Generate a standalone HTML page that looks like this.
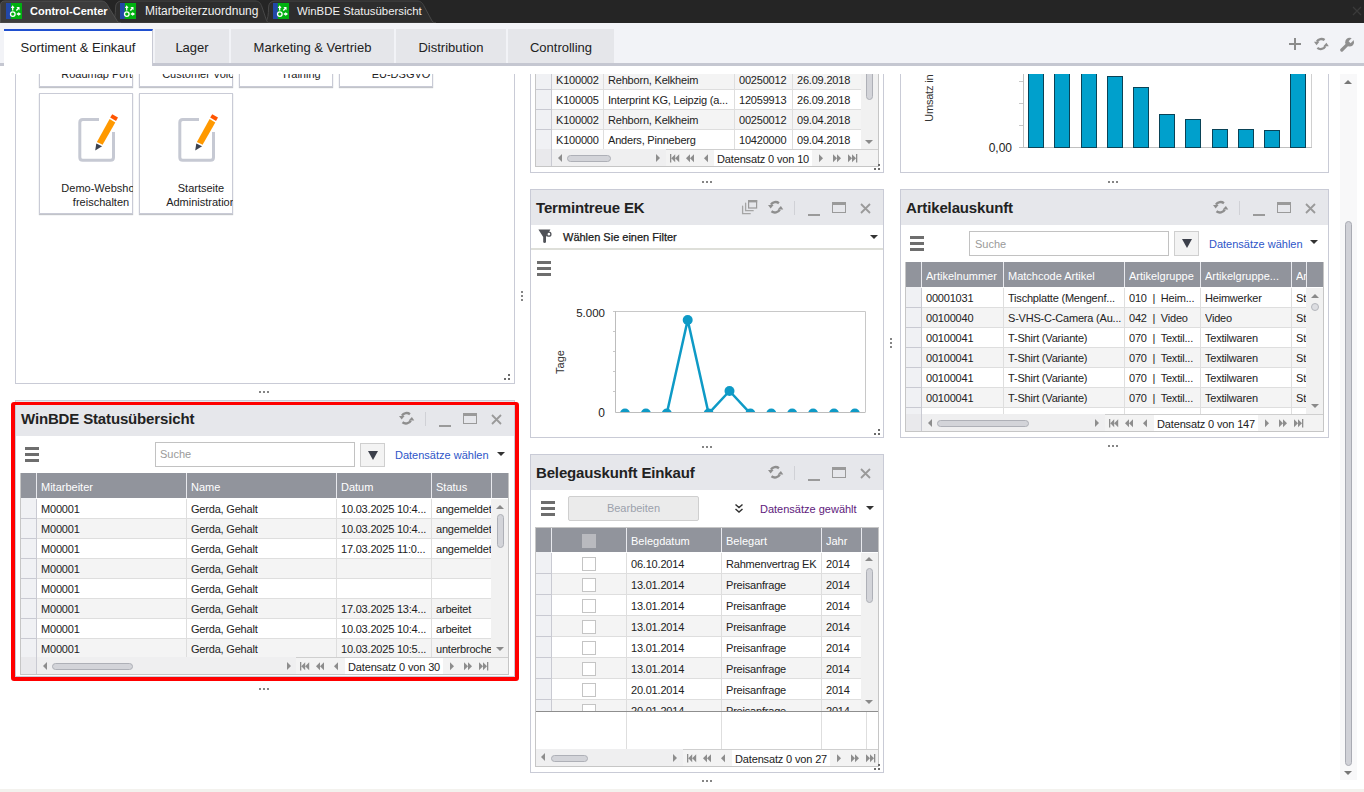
<!DOCTYPE html>
<html><head><meta charset="utf-8"><style>
html,body{margin:0;padding:0;}
body{width:1364px;height:792px;overflow:hidden;position:relative;background:#fff;font-family:"Liberation Sans",sans-serif;color:#222;}
div{position:absolute;box-sizing:border-box;}
.t{white-space:nowrap;font-size:11px;line-height:14px;}
.clip{overflow:hidden;}
</style></head><body>

<div style="left:0;top:74px;width:1364px;height:715px;overflow:hidden"><div style="left:0;top:-74px;width:1364px;height:792px">
<div style="left:15px;top:20px;width:500px;height:364px;border:1px solid #c9cbd6;background:#fff;box-sizing:border-box"></div>
<div style="left:39px;top:-34px;width:94px;height:121px;border:1px solid #c9cbd6;background:#fff;box-shadow:0 1px 1px rgba(80,85,100,0.35)"></div><div class="clip" style="left:40px;top:-34px;width:93px;height:121px"><div class="t" style="left:-39px;top:87px;width:200px;text-align:center;line-height:14px">Produkt<br>Roadmap Portal</div></div>
<div style="left:139px;top:-34px;width:94px;height:121px;border:1px solid #c9cbd6;background:#fff;box-shadow:0 1px 1px rgba(80,85,100,0.35)"></div><div class="clip" style="left:140px;top:-34px;width:93px;height:121px"><div class="t" style="left:-39px;top:87px;width:200px;text-align:center;line-height:14px">Produkt<br>Customer Voice</div></div>
<div style="left:239px;top:-34px;width:94px;height:121px;border:1px solid #c9cbd6;background:#fff;box-shadow:0 1px 1px rgba(80,85,100,0.35)"></div><div class="clip" style="left:240px;top:-34px;width:93px;height:121px"><div class="t" style="left:-39px;top:87px;width:200px;text-align:center;line-height:14px">Produkt<br>Training</div></div>
<div style="left:339px;top:-34px;width:94px;height:121px;border:1px solid #c9cbd6;background:#fff;box-shadow:0 1px 1px rgba(80,85,100,0.35)"></div><div class="clip" style="left:340px;top:-34px;width:93px;height:121px"><div class="t" style="left:-39px;top:87px;width:200px;text-align:center;line-height:14px">Produkt<br>EU-DSGVO</div></div>
<div style="left:39px;top:93px;width:94px;height:121px;border:1px solid #c9cbd6;background:#fff;box-shadow:0 1px 1px rgba(80,85,100,0.35)"></div><div class="clip" style="left:40px;top:93px;width:93px;height:121px"><div class="t" style="left:-39px;top:88px;width:200px;text-align:center;line-height:14px">Demo-Webshop<br>freischalten</div></div>
<svg style="position:absolute;left:70px;top:105px" width="55" height="60" viewBox="0 0 55 60"><path d="M29 14.4 H12.8 Q9.8 14.4 9.8 17.4 V52.3 Q9.8 55.3 12.8 55.3 H40.5 Q43.5 55.3 43.5 52.3 V27" fill="none" stroke="#c6c9d3" stroke-width="3"/><path d="M26.9 37.1 L32.6 39.8 L45.3 17.4 L39.6 14.1 Z" fill="#ff9900"/><path d="M40.2 12.6 L46 15.9 L48 12.6 L42.2 9.3 Z" fill="#ff5500"/><path d="M26.3 38.6 L32.1 41.3 L25.2 45.5 Z" fill="#3c4250"/></svg>
<div style="left:139px;top:93px;width:94px;height:121px;border:1px solid #c9cbd6;background:#fff;box-shadow:0 1px 1px rgba(80,85,100,0.35)"></div><div class="clip" style="left:140px;top:93px;width:93px;height:121px"><div class="t" style="left:-39px;top:88px;width:200px;text-align:center;line-height:14px">Startseite<br>Administration</div></div>
<svg style="position:absolute;left:170px;top:105px" width="55" height="60" viewBox="0 0 55 60"><path d="M29 14.4 H12.8 Q9.8 14.4 9.8 17.4 V52.3 Q9.8 55.3 12.8 55.3 H40.5 Q43.5 55.3 43.5 52.3 V27" fill="none" stroke="#c6c9d3" stroke-width="3"/><path d="M26.9 37.1 L32.6 39.8 L45.3 17.4 L39.6 14.1 Z" fill="#ff9900"/><path d="M40.2 12.6 L46 15.9 L48 12.6 L42.2 9.3 Z" fill="#ff5500"/><path d="M26.3 38.6 L32.1 41.3 L25.2 45.5 Z" fill="#3c4250"/></svg>
<div style="left:508px;top:374px;width:2px;height:2px;background:#6a6a6a"></div><div style="left:504px;top:378px;width:2px;height:2px;background:#6a6a6a"></div><div style="left:508px;top:378px;width:2px;height:2px;background:#6a6a6a"></div>
<div style="left:259px;top:391px;width:2px;height:2px;background:#858585"></div><div style="left:263px;top:391px;width:2px;height:2px;background:#858585"></div><div style="left:267px;top:391px;width:2px;height:2px;background:#858585"></div>
<div style="left:521px;top:291px;width:2px;height:2px;background:#858585"></div><div style="left:521px;top:295px;width:2px;height:2px;background:#858585"></div><div style="left:521px;top:299px;width:2px;height:2px;background:#858585"></div>
<div style="left:15px;top:400px;width:500px;height:277px;border:1px solid #c9cbd6;background:#fff;box-sizing:border-box"></div><div style="left:16px;top:401px;width:498px;height:35px;background:#e6e7eb"></div><div class="t" style="left:21px;top:401px;font-size:15px;font-weight:bold;color:#222;line-height:36px;letter-spacing:-0.15px">WinBDE Statusübersicht</div><svg style="position:absolute;left:398px;top:410px" width="16.5" height="16.5" viewBox="0 0 15 15"><path d="M10.85 3.78 A5 5 0 0 0 3.6 5.2" fill="none" stroke="#8e8e8e" stroke-width="2.2"/><path d="M4.09 11.16 A5 5 0 0 0 11.6 9.6" fill="none" stroke="#8e8e8e" stroke-width="2.2"/><path d="M0.9 5.4 L6 5.4 L3.3 8.6 Z" fill="#8e8e8e"/><path d="M9.7 9.6 L14.8 9.6 L12.6 6.3 Z" fill="#8e8e8e"/></svg><div style="left:425px;top:412px;width:1px;height:14px;background:#d0d1d6"></div><div style="left:439px;top:425px;width:12px;height:2px;background:#9a9a9a"></div><div style="left:463px;top:413px;width:14px;height:11px;border:1.5px solid #9a9a9a;border-top-width:3px;box-sizing:border-box"></div><svg style="position:absolute;left:491px;top:414px" width="11" height="11" viewBox="0 0 11 11"><path d="M1 1L10 10M10 1L1 10" stroke="#9a9a9a" stroke-width="1.8"/></svg>
<div style="left:25px;top:447px;width:14px;height:3px;background:#6e6e6e"></div><div style="left:25px;top:453px;width:14px;height:3px;background:#6e6e6e"></div><div style="left:25px;top:459px;width:14px;height:3px;background:#6e6e6e"></div>
<div style="left:155px;top:442px;width:200px;height:25px;border:1px solid #c2c2c2;background:#fff"></div>
<div class="t" style="left:160px;top:442px;color:#9a9a9a;line-height:25px">Suche</div>
<div style="left:360px;top:443px;width:25px;height:24px;border:1px solid #cfcfcf;background:#f3f3f3"></div>
<div style="left:368px;top:451px;width:0;height:0;border-top:9px solid #3b3f4a;border-left:5px solid transparent;border-right:5px solid transparent"></div>
<div class="t" style="left:395px;top:448px;font-size:11px;color:#2d55c8;line-height:14px">Datensätze wählen</div>
<div style="left:497px;top:452px;width:0;height:0;border-top:4px solid #333;border-left:4px solid transparent;border-right:4px solid transparent"></div>
<div style="left:20px;top:473px;width:489px;height:202px;border:1px solid #c6c6c6;background:#fff"></div><div style="left:21px;top:498px;width:15px;height:159px;background:#f0f1f4"></div><div style="left:21px;top:499px;width:470px;height:20px;background:#fff"></div><div style="left:21px;top:499px;width:15px;height:20px;background:#f0f1f4"></div><div style="left:21px;top:518px;width:470px;height:1px;background:#dedede"></div><div style="left:21px;top:518px;width:15px;height:1px;background:#c9cad2"></div><div class="t clip" style="left:41px;top:499px;width:145px;height:20px;line-height:21px;letter-spacing:-0.2px">M00001</div><div class="t clip" style="left:191px;top:499px;width:145px;height:20px;line-height:21px;letter-spacing:-0.2px">Gerda, Gehalt</div><div class="t clip" style="left:341px;top:499px;width:90px;height:20px;line-height:21px;letter-spacing:-0.2px">10.03.2025 10:4...</div><div class="t clip" style="left:436px;top:499px;width:55px;height:20px;line-height:21px;letter-spacing:-0.2px">angemeldet</div><div style="left:21px;top:519px;width:470px;height:20px;background:#f4f4f4"></div><div style="left:21px;top:519px;width:15px;height:20px;background:#f0f1f4"></div><div style="left:21px;top:538px;width:470px;height:1px;background:#dedede"></div><div style="left:21px;top:538px;width:15px;height:1px;background:#c9cad2"></div><div class="t clip" style="left:41px;top:519px;width:145px;height:20px;line-height:21px;letter-spacing:-0.2px">M00001</div><div class="t clip" style="left:191px;top:519px;width:145px;height:20px;line-height:21px;letter-spacing:-0.2px">Gerda, Gehalt</div><div class="t clip" style="left:341px;top:519px;width:90px;height:20px;line-height:21px;letter-spacing:-0.2px">10.03.2025 10:4...</div><div class="t clip" style="left:436px;top:519px;width:55px;height:20px;line-height:21px;letter-spacing:-0.2px">angemeldet</div><div style="left:21px;top:539px;width:470px;height:20px;background:#fff"></div><div style="left:21px;top:539px;width:15px;height:20px;background:#f0f1f4"></div><div style="left:21px;top:558px;width:470px;height:1px;background:#dedede"></div><div style="left:21px;top:558px;width:15px;height:1px;background:#c9cad2"></div><div class="t clip" style="left:41px;top:539px;width:145px;height:20px;line-height:21px;letter-spacing:-0.2px">M00001</div><div class="t clip" style="left:191px;top:539px;width:145px;height:20px;line-height:21px;letter-spacing:-0.2px">Gerda, Gehalt</div><div class="t clip" style="left:341px;top:539px;width:90px;height:20px;line-height:21px;letter-spacing:-0.2px">17.03.2025 11:0...</div><div class="t clip" style="left:436px;top:539px;width:55px;height:20px;line-height:21px;letter-spacing:-0.2px">angemeldet</div><div style="left:21px;top:559px;width:470px;height:20px;background:#f4f4f4"></div><div style="left:21px;top:559px;width:15px;height:20px;background:#f0f1f4"></div><div style="left:21px;top:578px;width:470px;height:1px;background:#dedede"></div><div style="left:21px;top:578px;width:15px;height:1px;background:#c9cad2"></div><div class="t clip" style="left:41px;top:559px;width:145px;height:20px;line-height:21px;letter-spacing:-0.2px">M00001</div><div class="t clip" style="left:191px;top:559px;width:145px;height:20px;line-height:21px;letter-spacing:-0.2px">Gerda, Gehalt</div><div style="left:21px;top:579px;width:470px;height:20px;background:#fff"></div><div style="left:21px;top:579px;width:15px;height:20px;background:#f0f1f4"></div><div style="left:21px;top:598px;width:470px;height:1px;background:#dedede"></div><div style="left:21px;top:598px;width:15px;height:1px;background:#c9cad2"></div><div class="t clip" style="left:41px;top:579px;width:145px;height:20px;line-height:21px;letter-spacing:-0.2px">M00001</div><div class="t clip" style="left:191px;top:579px;width:145px;height:20px;line-height:21px;letter-spacing:-0.2px">Gerda, Gehalt</div><div style="left:21px;top:599px;width:470px;height:20px;background:#f4f4f4"></div><div style="left:21px;top:599px;width:15px;height:20px;background:#f0f1f4"></div><div style="left:21px;top:618px;width:470px;height:1px;background:#dedede"></div><div style="left:21px;top:618px;width:15px;height:1px;background:#c9cad2"></div><div class="t clip" style="left:41px;top:599px;width:145px;height:20px;line-height:21px;letter-spacing:-0.2px">M00001</div><div class="t clip" style="left:191px;top:599px;width:145px;height:20px;line-height:21px;letter-spacing:-0.2px">Gerda, Gehalt</div><div class="t clip" style="left:341px;top:599px;width:90px;height:20px;line-height:21px;letter-spacing:-0.2px">17.03.2025 13:4...</div><div class="t clip" style="left:436px;top:599px;width:55px;height:20px;line-height:21px;letter-spacing:-0.2px">arbeitet</div><div style="left:21px;top:619px;width:470px;height:20px;background:#fff"></div><div style="left:21px;top:619px;width:15px;height:20px;background:#f0f1f4"></div><div style="left:21px;top:638px;width:470px;height:1px;background:#dedede"></div><div style="left:21px;top:638px;width:15px;height:1px;background:#c9cad2"></div><div class="t clip" style="left:41px;top:619px;width:145px;height:20px;line-height:21px;letter-spacing:-0.2px">M00001</div><div class="t clip" style="left:191px;top:619px;width:145px;height:20px;line-height:21px;letter-spacing:-0.2px">Gerda, Gehalt</div><div class="t clip" style="left:341px;top:619px;width:90px;height:20px;line-height:21px;letter-spacing:-0.2px">10.03.2025 10:4...</div><div class="t clip" style="left:436px;top:619px;width:55px;height:20px;line-height:21px;letter-spacing:-0.2px">arbeitet</div><div style="left:21px;top:639px;width:470px;height:18px;background:#f4f4f4"></div><div style="left:21px;top:639px;width:15px;height:18px;background:#f0f1f4"></div><div class="t clip" style="left:41px;top:639px;width:145px;height:18px;line-height:21px;letter-spacing:-0.2px">M00001</div><div class="t clip" style="left:191px;top:639px;width:145px;height:18px;line-height:21px;letter-spacing:-0.2px">Gerda, Gehalt</div><div class="t clip" style="left:341px;top:639px;width:90px;height:18px;line-height:21px;letter-spacing:-0.2px">10.03.2025 10:5...</div><div class="t clip" style="left:436px;top:639px;width:55px;height:18px;line-height:21px;letter-spacing:-0.2px">unterbrochen</div><div style="left:186px;top:499px;width:1px;height:158px;background:#dedede"></div><div style="left:336px;top:499px;width:1px;height:158px;background:#dedede"></div><div style="left:431px;top:499px;width:1px;height:158px;background:#dedede"></div><div style="left:36px;top:499px;width:1px;height:158px;background:#c9cad2"></div><div style="left:21px;top:473px;width:487px;height:25px;background:#91949c"></div><div style="left:36px;top:473px;width:1px;height:25px;background:#e8e9ee"></div><div style="left:186px;top:473px;width:1px;height:25px;background:#e8e9ee"></div><div style="left:336px;top:473px;width:1px;height:25px;background:#e8e9ee"></div><div style="left:431px;top:473px;width:1px;height:25px;background:#e8e9ee"></div><div style="left:491px;top:473px;width:1px;height:25px;background:#e8e9ee"></div><div class="t clip" style="left:41px;top:473px;width:145px;height:25px;line-height:28px;color:#fff">Mitarbeiter</div><div class="t clip" style="left:191px;top:473px;width:145px;height:25px;line-height:28px;color:#fff">Name</div><div class="t clip" style="left:341px;top:473px;width:90px;height:25px;line-height:28px;color:#fff">Datum</div><div class="t clip" style="left:436px;top:473px;width:55px;height:25px;line-height:28px;color:#fff">Status</div><div style="left:491px;top:499px;width:17px;height:158px;background:#f1f1f1"></div>
<div style="left:496px;top:505px;width:0;height:0;border-bottom:4px solid #8a8a8a;border-left:4px solid transparent;border-right:4px solid transparent"></div><div style="left:496px;top:647px;width:0;height:0;border-top:4px solid #8a8a8a;border-left:4px solid transparent;border-right:4px solid transparent"></div><div style="left:497px;top:514px;width:7px;height:34px;background:#d3d4d9;border:1px solid #aeb0b7;border-radius:4px"></div>
<div style="left:21px;top:657px;width:16px;height:17px;background:#e9e9ec"></div><div style="left:36px;top:657px;width:1px;height:17px;background:#c9cad2"></div><div style="left:37px;top:657px;width:259px;height:17px;background:#efeff0"></div><div style="left:296px;top:657px;width:212px;height:17px;background:#f3f3f3;border-top:1px solid #cfcfcf"></div><div style="left:43px;top:662px;width:0;height:0;border-right:4px solid #8d8d8d;border-top:4px solid transparent;border-bottom:4px solid transparent"></div><div style="left:52px;top:663px;width:81px;height:7px;background:#d3d4d9;border:1px solid #aeb0b7;border-radius:4px"></div><div style="left:287px;top:662px;width:0;height:0;border-left:4px solid #8d8d8d;border-top:4px solid transparent;border-bottom:4px solid transparent"></div><svg style="position:absolute;left:299px;top:662px" width="42" height="9" viewBox="-1 0 42 9"><path d="M0 0 H1.3 V8.5 H0Z M1.3 4.25 L5.2 0.2 V8.3Z M5.2 4.25 L9.2 0.2 V8.3Z M16 4.25 L20 0.2 V8.3Z M20 4.25 L24 0.2 V8.3Z M34 4.25 L38 0.2 V8.3Z" fill="#8d8d8d"/></svg><div style="left:345px;top:658px;width:98px;height:16px;background:#fff"></div><div class="t" style="left:348px;top:657px;height:17px;line-height:20px;letter-spacing:-0.15px">Datensatz 0 von 30</div><svg style="position:absolute;left:450px;top:662px" width="42" height="9" viewBox="0 0 42 9"><path d="M0 0.2 L4 4.25 L0 8.3Z M14 0.2 L18 4.25 L14 8.3Z M18 0.2 L22 4.25 L18 8.3Z M29 0.2 L33 4.25 L29 8.3Z M33 0.2 L37 4.25 L33 8.3Z M37 0 H38.3 V8.5 H37Z" fill="#8d8d8d"/></svg>
<div style="left:11px;top:402px;width:508px;height:279px;border:4px solid #ff0000;border-top-width:3px;border-radius:3px"></div>
<div style="left:259px;top:688px;width:2px;height:2px;background:#858585"></div><div style="left:263px;top:688px;width:2px;height:2px;background:#858585"></div><div style="left:267px;top:688px;width:2px;height:2px;background:#858585"></div>
<div style="left:530px;top:20px;width:354px;height:153px;border:1px solid #c9cbd6;background:#fff;box-sizing:border-box"></div>
<div style="left:535px;top:40px;width:344px;height:127px;border:1px solid #c6c6c6;background:#fff"></div><div style="left:536px;top:70px;width:325px;height:20px;background:#f4f4f4"></div><div style="left:536px;top:70px;width:15px;height:20px;background:#f0f1f4"></div><div style="left:536px;top:89px;width:325px;height:1px;background:#dedede"></div><div style="left:536px;top:89px;width:15px;height:1px;background:#c9cad2"></div><div class="t clip" style="left:556px;top:70px;width:47px;height:20px;line-height:21px;letter-spacing:-0.2px">K100002</div><div class="t clip" style="left:608px;top:70px;width:126px;height:20px;line-height:21px;letter-spacing:-0.2px">Rehborn, Kelkheim</div><div class="t clip" style="left:739px;top:70px;width:53px;height:20px;line-height:21px;letter-spacing:-0.2px">00250012</div><div class="t clip" style="left:797px;top:70px;width:64px;height:20px;line-height:21px;letter-spacing:-0.2px">26.09.2018</div><div style="left:536px;top:90px;width:325px;height:20px;background:#fff"></div><div style="left:536px;top:90px;width:15px;height:20px;background:#f0f1f4"></div><div style="left:536px;top:109px;width:325px;height:1px;background:#dedede"></div><div style="left:536px;top:109px;width:15px;height:1px;background:#c9cad2"></div><div class="t clip" style="left:556px;top:90px;width:47px;height:20px;line-height:21px;letter-spacing:-0.2px">K100005</div><div class="t clip" style="left:608px;top:90px;width:126px;height:20px;line-height:21px;letter-spacing:-0.2px">Interprint KG, Leipzig (a...</div><div class="t clip" style="left:739px;top:90px;width:53px;height:20px;line-height:21px;letter-spacing:-0.2px">12059913</div><div class="t clip" style="left:797px;top:90px;width:64px;height:20px;line-height:21px;letter-spacing:-0.2px">26.09.2018</div><div style="left:536px;top:110px;width:325px;height:20px;background:#f4f4f4"></div><div style="left:536px;top:110px;width:15px;height:20px;background:#f0f1f4"></div><div style="left:536px;top:129px;width:325px;height:1px;background:#dedede"></div><div style="left:536px;top:129px;width:15px;height:1px;background:#c9cad2"></div><div class="t clip" style="left:556px;top:110px;width:47px;height:20px;line-height:21px;letter-spacing:-0.2px">K100002</div><div class="t clip" style="left:608px;top:110px;width:126px;height:20px;line-height:21px;letter-spacing:-0.2px">Rehborn, Kelkheim</div><div class="t clip" style="left:739px;top:110px;width:53px;height:20px;line-height:21px;letter-spacing:-0.2px">00250012</div><div class="t clip" style="left:797px;top:110px;width:64px;height:20px;line-height:21px;letter-spacing:-0.2px">09.04.2018</div><div style="left:536px;top:130px;width:325px;height:19px;background:#fff"></div><div style="left:536px;top:130px;width:15px;height:19px;background:#f0f1f4"></div><div class="t clip" style="left:556px;top:130px;width:47px;height:19px;line-height:21px;letter-spacing:-0.2px">K100000</div><div class="t clip" style="left:608px;top:130px;width:126px;height:19px;line-height:21px;letter-spacing:-0.2px">Anders, Pinneberg</div><div class="t clip" style="left:739px;top:130px;width:53px;height:19px;line-height:21px;letter-spacing:-0.2px">10420000</div><div class="t clip" style="left:797px;top:130px;width:64px;height:19px;line-height:21px;letter-spacing:-0.2px">09.04.2018</div><div style="left:603px;top:70px;width:1px;height:79px;background:#dedede"></div><div style="left:734px;top:70px;width:1px;height:79px;background:#dedede"></div><div style="left:792px;top:70px;width:1px;height:79px;background:#dedede"></div><div style="left:551px;top:70px;width:1px;height:79px;background:#c9cad2"></div><div style="left:861px;top:41px;width:17px;height:108px;background:#f1f1f1"></div>
<div style="left:865px;top:140px;width:0;height:0;border-top:4px solid #8a8a8a;border-left:4px solid transparent;border-right:4px solid transparent"></div><div style="left:866px;top:30px;width:7px;height:70px;background:#d3d4d9;border:1px solid #aeb0b7;border-radius:4px"></div>
<div style="left:536px;top:149px;width:16px;height:17px;background:#e9e9ec"></div><div style="left:551px;top:149px;width:1px;height:17px;background:#c9cad2"></div><div style="left:552px;top:149px;width:114px;height:17px;background:#efeff0"></div><div style="left:666px;top:149px;width:212px;height:17px;background:#f3f3f3;border-top:1px solid #cfcfcf"></div><div style="left:558px;top:154px;width:0;height:0;border-right:4px solid #8d8d8d;border-top:4px solid transparent;border-bottom:4px solid transparent"></div><div style="left:567px;top:155px;width:44px;height:7px;background:#d3d4d9;border:1px solid #aeb0b7;border-radius:4px"></div><div style="left:656px;top:154px;width:0;height:0;border-left:4px solid #8d8d8d;border-top:4px solid transparent;border-bottom:4px solid transparent"></div><svg style="position:absolute;left:669px;top:154px" width="42" height="9" viewBox="-1 0 42 9"><path d="M0 0 H1.3 V8.5 H0Z M1.3 4.25 L5.2 0.2 V8.3Z M5.2 4.25 L9.2 0.2 V8.3Z M16 4.25 L20 0.2 V8.3Z M20 4.25 L24 0.2 V8.3Z M34 4.25 L38 0.2 V8.3Z" fill="#8d8d8d"/></svg><div style="left:714px;top:150px;width:98px;height:16px;background:#fff"></div><div class="t" style="left:717px;top:149px;height:17px;line-height:20px;letter-spacing:-0.15px">Datensatz 0 von 10</div><svg style="position:absolute;left:819px;top:154px" width="42" height="9" viewBox="0 0 42 9"><path d="M0 0.2 L4 4.25 L0 8.3Z M14 0.2 L18 4.25 L14 8.3Z M18 0.2 L22 4.25 L18 8.3Z M29 0.2 L33 4.25 L29 8.3Z M33 0.2 L37 4.25 L33 8.3Z M37 0 H38.3 V8.5 H37Z" fill="#8d8d8d"/></svg>
<div style="left:878px;top:164px;width:2px;height:2px;background:#6a6a6a"></div><div style="left:874px;top:168px;width:2px;height:2px;background:#6a6a6a"></div><div style="left:878px;top:168px;width:2px;height:2px;background:#6a6a6a"></div>
<div style="left:702px;top:181px;width:2px;height:2px;background:#858585"></div><div style="left:706px;top:181px;width:2px;height:2px;background:#858585"></div><div style="left:710px;top:181px;width:2px;height:2px;background:#858585"></div>
<div style="left:530px;top:189px;width:354px;height:249px;border:1px solid #c9cbd6;background:#fff;box-sizing:border-box"></div><div style="left:531px;top:190px;width:352px;height:35px;background:#e6e7eb"></div><div class="t" style="left:536px;top:190px;font-size:15px;font-weight:bold;color:#222;line-height:36px;letter-spacing:-0.15px">Termintreue EK</div><svg style="position:absolute;left:767px;top:199px" width="16.5" height="16.5" viewBox="0 0 15 15"><path d="M10.85 3.78 A5 5 0 0 0 3.6 5.2" fill="none" stroke="#8e8e8e" stroke-width="2.2"/><path d="M4.09 11.16 A5 5 0 0 0 11.6 9.6" fill="none" stroke="#8e8e8e" stroke-width="2.2"/><path d="M0.9 5.4 L6 5.4 L3.3 8.6 Z" fill="#8e8e8e"/><path d="M9.7 9.6 L14.8 9.6 L12.6 6.3 Z" fill="#8e8e8e"/></svg><div style="left:794px;top:201px;width:1px;height:14px;background:#d0d1d6"></div><div style="left:808px;top:214px;width:12px;height:2px;background:#9a9a9a"></div><div style="left:832px;top:202px;width:14px;height:11px;border:1.5px solid #9a9a9a;border-top-width:3px;box-sizing:border-box"></div><svg style="position:absolute;left:860px;top:203px" width="11" height="11" viewBox="0 0 11 11"><path d="M1 1L10 10M10 1L1 10" stroke="#9a9a9a" stroke-width="1.8"/></svg><svg style="position:absolute;left:741px;top:199px" width="17" height="17" viewBox="0 0 17 17"><rect x="7.6" y="1.6" width="8" height="7.4" fill="none" stroke="#9a9a9a" stroke-width="1.2"/><rect x="7" y="1" width="9.2" height="2.4" fill="#9a9a9a"/><path d="M4.6 4.2 V11.7 H12.2" fill="none" stroke="#a5a5a5" stroke-width="1.3" stroke-linecap="round"/><path d="M1.6 7.2 V14.7 H9.2" fill="none" stroke="#a5a5a5" stroke-width="1.3" stroke-linecap="round"/></svg>
<div style="left:531px;top:225px;width:352px;height:25px;background:#fff;border-bottom:2px solid #dedfd9"></div>
<svg style="position:absolute;left:538px;top:229px" width="14" height="15" viewBox="0 0 14 15"><path d="M0.4 0.4 H12.4 L8 8 V13.2 Q6.6 14.6 5.2 13.2 V8 Z" fill="#505258"/><circle cx="10.9" cy="5.2" r="2" fill="#fff" stroke="#505258" stroke-width="1.3"/></svg>
<div class="t" style="left:563px;top:230px;font-size:11px;color:#1a1a1a;line-height:14px;-webkit-text-stroke:0.25px #1a1a1a">Wählen Sie einen Filter</div>
<div style="left:870px;top:235px;width:0;height:0;border-top:4px solid #333;border-left:4px solid transparent;border-right:4px solid transparent"></div>
<div style="left:537px;top:261px;width:14px;height:3px;background:#6e6e6e"></div><div style="left:537px;top:267px;width:14px;height:3px;background:#6e6e6e"></div><div style="left:537px;top:273px;width:14px;height:3px;background:#6e6e6e"></div>
<svg style="position:absolute;left:530px;top:290px" width="350" height="140" viewBox="0 0 350 140">
<defs><clipPath id="pc"><rect x="86" y="0" width="249" height="122"/></clipPath></defs>
<path d="M83 21.5 H86" stroke="#c8c8c8"/><path d="M83 41.5 H86" stroke="#c8c8c8"/><path d="M83 61.5 H86" stroke="#c8c8c8"/><path d="M83 81.5 H86" stroke="#c8c8c8"/><path d="M83 101.5 H86" stroke="#c8c8c8"/>
<g clip-path="url(#pc)"><polyline points="95.0,123.5 115.9,123.5 136.8,123.5 157.7,30.0 178.6,123.5 199.5,101.0 220.4,123.5 241.3,123.5 262.2,123.5 283.1,123.5 304.0,123.5 324.9,123.5" fill="none" stroke="#0e9ac6" stroke-width="2.5"/><circle cx="95.0" cy="123.5" r="5" fill="#0e9ac6"/><circle cx="115.9" cy="123.5" r="5" fill="#0e9ac6"/><circle cx="136.8" cy="123.5" r="5" fill="#0e9ac6"/><circle cx="157.7" cy="30.0" r="5" fill="#0e9ac6"/><circle cx="178.6" cy="123.5" r="5" fill="#0e9ac6"/><circle cx="199.5" cy="101.0" r="5" fill="#0e9ac6"/><circle cx="220.4" cy="123.5" r="5" fill="#0e9ac6"/><circle cx="241.3" cy="123.5" r="5" fill="#0e9ac6"/><circle cx="262.2" cy="123.5" r="5" fill="#0e9ac6"/><circle cx="283.1" cy="123.5" r="5" fill="#0e9ac6"/><circle cx="304.0" cy="123.5" r="5" fill="#0e9ac6"/><circle cx="324.9" cy="123.5" r="5" fill="#0e9ac6"/></g>
<path d="M85.5 21.5 H335.5 V122" fill="none" stroke="#c8c8c8"/>
<path d="M85.5 21 V122.5 H335.5" fill="none" stroke="#bdbdbd"/>
<text x="75" y="27" text-anchor="end" font-size="11.5" fill="#222" font-family="Liberation Sans">5.000</text>
<text x="75" y="127" text-anchor="end" font-size="12" fill="#222" font-family="Liberation Sans">0</text>
<text transform="translate(34 72) rotate(-90)" text-anchor="middle" font-size="11" fill="#333" font-family="Liberation Sans">Tage</text>
</svg>
<div style="left:878px;top:429px;width:2px;height:2px;background:#6a6a6a"></div><div style="left:874px;top:433px;width:2px;height:2px;background:#6a6a6a"></div><div style="left:878px;top:433px;width:2px;height:2px;background:#6a6a6a"></div>
<div style="left:702px;top:446px;width:2px;height:2px;background:#858585"></div><div style="left:706px;top:446px;width:2px;height:2px;background:#858585"></div><div style="left:710px;top:446px;width:2px;height:2px;background:#858585"></div>
<div style="left:890px;top:338px;width:2px;height:2px;background:#858585"></div><div style="left:890px;top:342px;width:2px;height:2px;background:#858585"></div><div style="left:890px;top:346px;width:2px;height:2px;background:#858585"></div>
<div style="left:530px;top:454px;width:354px;height:319px;border:1px solid #c9cbd6;background:#fff;box-sizing:border-box"></div><div style="left:531px;top:455px;width:352px;height:35px;background:#e6e7eb"></div><div class="t" style="left:536px;top:455px;font-size:15px;font-weight:bold;color:#222;line-height:36px;letter-spacing:-0.15px">Belegauskunft Einkauf</div><svg style="position:absolute;left:767px;top:464px" width="16.5" height="16.5" viewBox="0 0 15 15"><path d="M10.85 3.78 A5 5 0 0 0 3.6 5.2" fill="none" stroke="#8e8e8e" stroke-width="2.2"/><path d="M4.09 11.16 A5 5 0 0 0 11.6 9.6" fill="none" stroke="#8e8e8e" stroke-width="2.2"/><path d="M0.9 5.4 L6 5.4 L3.3 8.6 Z" fill="#8e8e8e"/><path d="M9.7 9.6 L14.8 9.6 L12.6 6.3 Z" fill="#8e8e8e"/></svg><div style="left:794px;top:466px;width:1px;height:14px;background:#d0d1d6"></div><div style="left:808px;top:479px;width:12px;height:2px;background:#9a9a9a"></div><div style="left:832px;top:467px;width:14px;height:11px;border:1.5px solid #9a9a9a;border-top-width:3px;box-sizing:border-box"></div><svg style="position:absolute;left:860px;top:468px" width="11" height="11" viewBox="0 0 11 11"><path d="M1 1L10 10M10 1L1 10" stroke="#9a9a9a" stroke-width="1.8"/></svg>
<div style="left:541px;top:501px;width:14px;height:3px;background:#6e6e6e"></div><div style="left:541px;top:507px;width:14px;height:3px;background:#6e6e6e"></div><div style="left:541px;top:513px;width:14px;height:3px;background:#6e6e6e"></div>
<div style="left:568px;top:496px;width:131px;height:25px;border:1px solid #cfcfcf;background:#ebebeb;border-radius:2px;color:#9ba1ab;font-size:11px;line-height:23px;text-align:center">Bearbeiten</div>
<svg style="position:absolute;left:734px;top:503px" width="10" height="11" viewBox="0 0 10 11"><path d="M1.5 1.5 L5 4.5 L8.5 1.5 M1.5 6 L5 9 L8.5 6" fill="none" stroke="#333" stroke-width="1.5"/></svg>
<div class="t" style="left:760px;top:502px;font-size:11px;color:#5e1a7c;line-height:14px">Datensätze gewählt</div>
<div style="left:866px;top:506px;width:0;height:0;border-top:4px solid #333;border-left:4px solid transparent;border-right:4px solid transparent"></div>
<div style="left:535px;top:527px;width:344px;height:240px;border:1px solid #c6c6c6;background:#fff"></div><div style="left:536px;top:551px;width:15px;height:160px;background:#f0f1f4"></div><div style="left:536px;top:553px;width:325px;height:21px;background:#fff"></div><div style="left:536px;top:553px;width:15px;height:21px;background:#f0f1f4"></div><div style="left:536px;top:573px;width:325px;height:1px;background:#dedede"></div><div style="left:536px;top:573px;width:15px;height:1px;background:#c9cad2"></div><div class="t clip" style="left:631px;top:553px;width:90px;height:21px;line-height:22px;letter-spacing:-0.2px">06.10.2014</div><div class="t clip" style="left:726px;top:553px;width:95px;height:21px;line-height:22px;letter-spacing:-0.2px">Rahmenvertrag EK</div><div class="t clip" style="left:826px;top:553px;width:35px;height:21px;line-height:22px;letter-spacing:-0.2px">2014</div><div style="left:536px;top:574px;width:325px;height:21px;background:#f4f4f4"></div><div style="left:536px;top:574px;width:15px;height:21px;background:#f0f1f4"></div><div style="left:536px;top:594px;width:325px;height:1px;background:#dedede"></div><div style="left:536px;top:594px;width:15px;height:1px;background:#c9cad2"></div><div class="t clip" style="left:631px;top:574px;width:90px;height:21px;line-height:22px;letter-spacing:-0.2px">13.01.2014</div><div class="t clip" style="left:726px;top:574px;width:95px;height:21px;line-height:22px;letter-spacing:-0.2px">Preisanfrage</div><div class="t clip" style="left:826px;top:574px;width:35px;height:21px;line-height:22px;letter-spacing:-0.2px">2014</div><div style="left:536px;top:595px;width:325px;height:21px;background:#fff"></div><div style="left:536px;top:595px;width:15px;height:21px;background:#f0f1f4"></div><div style="left:536px;top:615px;width:325px;height:1px;background:#dedede"></div><div style="left:536px;top:615px;width:15px;height:1px;background:#c9cad2"></div><div class="t clip" style="left:631px;top:595px;width:90px;height:21px;line-height:22px;letter-spacing:-0.2px">13.01.2014</div><div class="t clip" style="left:726px;top:595px;width:95px;height:21px;line-height:22px;letter-spacing:-0.2px">Preisanfrage</div><div class="t clip" style="left:826px;top:595px;width:35px;height:21px;line-height:22px;letter-spacing:-0.2px">2014</div><div style="left:536px;top:616px;width:325px;height:21px;background:#f4f4f4"></div><div style="left:536px;top:616px;width:15px;height:21px;background:#f0f1f4"></div><div style="left:536px;top:636px;width:325px;height:1px;background:#dedede"></div><div style="left:536px;top:636px;width:15px;height:1px;background:#c9cad2"></div><div class="t clip" style="left:631px;top:616px;width:90px;height:21px;line-height:22px;letter-spacing:-0.2px">13.01.2014</div><div class="t clip" style="left:726px;top:616px;width:95px;height:21px;line-height:22px;letter-spacing:-0.2px">Preisanfrage</div><div class="t clip" style="left:826px;top:616px;width:35px;height:21px;line-height:22px;letter-spacing:-0.2px">2014</div><div style="left:536px;top:637px;width:325px;height:21px;background:#fff"></div><div style="left:536px;top:637px;width:15px;height:21px;background:#f0f1f4"></div><div style="left:536px;top:657px;width:325px;height:1px;background:#dedede"></div><div style="left:536px;top:657px;width:15px;height:1px;background:#c9cad2"></div><div class="t clip" style="left:631px;top:637px;width:90px;height:21px;line-height:22px;letter-spacing:-0.2px">13.01.2014</div><div class="t clip" style="left:726px;top:637px;width:95px;height:21px;line-height:22px;letter-spacing:-0.2px">Preisanfrage</div><div class="t clip" style="left:826px;top:637px;width:35px;height:21px;line-height:22px;letter-spacing:-0.2px">2014</div><div style="left:536px;top:658px;width:325px;height:21px;background:#f4f4f4"></div><div style="left:536px;top:658px;width:15px;height:21px;background:#f0f1f4"></div><div style="left:536px;top:678px;width:325px;height:1px;background:#dedede"></div><div style="left:536px;top:678px;width:15px;height:1px;background:#c9cad2"></div><div class="t clip" style="left:631px;top:658px;width:90px;height:21px;line-height:22px;letter-spacing:-0.2px">13.01.2014</div><div class="t clip" style="left:726px;top:658px;width:95px;height:21px;line-height:22px;letter-spacing:-0.2px">Preisanfrage</div><div class="t clip" style="left:826px;top:658px;width:35px;height:21px;line-height:22px;letter-spacing:-0.2px">2014</div><div style="left:536px;top:679px;width:325px;height:21px;background:#fff"></div><div style="left:536px;top:679px;width:15px;height:21px;background:#f0f1f4"></div><div style="left:536px;top:699px;width:325px;height:1px;background:#dedede"></div><div style="left:536px;top:699px;width:15px;height:1px;background:#c9cad2"></div><div class="t clip" style="left:631px;top:679px;width:90px;height:21px;line-height:22px;letter-spacing:-0.2px">20.01.2014</div><div class="t clip" style="left:726px;top:679px;width:95px;height:21px;line-height:22px;letter-spacing:-0.2px">Preisanfrage</div><div class="t clip" style="left:826px;top:679px;width:35px;height:21px;line-height:22px;letter-spacing:-0.2px">2014</div><div style="left:536px;top:700px;width:325px;height:11px;background:#f4f4f4"></div><div style="left:536px;top:700px;width:15px;height:11px;background:#f0f1f4"></div><div class="t clip" style="left:631px;top:700px;width:90px;height:11px;line-height:22px;letter-spacing:-0.2px">20.01.2014</div><div class="t clip" style="left:726px;top:700px;width:95px;height:11px;line-height:22px;letter-spacing:-0.2px">Preisanfrage</div><div class="t clip" style="left:826px;top:700px;width:35px;height:11px;line-height:22px;letter-spacing:-0.2px">2014</div><div style="left:626px;top:553px;width:1px;height:158px;background:#dedede"></div><div style="left:721px;top:553px;width:1px;height:158px;background:#dedede"></div><div style="left:821px;top:553px;width:1px;height:158px;background:#dedede"></div><div style="left:551px;top:553px;width:1px;height:158px;background:#c9cad2"></div><div style="left:536px;top:528px;width:342px;height:24px;background:#91949c"></div><div style="left:551px;top:528px;width:1px;height:24px;background:#e8e9ee"></div><div style="left:626px;top:528px;width:1px;height:24px;background:#e8e9ee"></div><div style="left:721px;top:528px;width:1px;height:24px;background:#e8e9ee"></div><div style="left:821px;top:528px;width:1px;height:24px;background:#e8e9ee"></div><div style="left:861px;top:528px;width:1px;height:24px;background:#e8e9ee"></div><div class="t clip" style="left:631px;top:528px;width:90px;height:24px;line-height:27px;color:#fff">Belegdatum</div><div class="t clip" style="left:726px;top:528px;width:95px;height:24px;line-height:27px;color:#fff">Belegart</div><div class="t clip" style="left:826px;top:528px;width:35px;height:24px;line-height:27px;color:#fff">Jahr</div><div style="left:861px;top:553px;width:17px;height:158px;background:#f1f1f1"></div>
<div style="left:582px;top:557px;width:14px;height:14px;border:1px solid #c4c4c4;background:#fff"></div>
<div style="left:582px;top:578px;width:14px;height:14px;border:1px solid #c4c4c4;background:#fff"></div>
<div style="left:582px;top:599px;width:14px;height:14px;border:1px solid #c4c4c4;background:#fff"></div>
<div style="left:582px;top:620px;width:14px;height:14px;border:1px solid #c4c4c4;background:#fff"></div>
<div style="left:582px;top:641px;width:14px;height:14px;border:1px solid #c4c4c4;background:#fff"></div>
<div style="left:582px;top:662px;width:14px;height:14px;border:1px solid #c4c4c4;background:#fff"></div>
<div style="left:582px;top:683px;width:14px;height:14px;border:1px solid #c4c4c4;background:#fff"></div>
<div style="left:582px;top:704px;width:14px;height:7px;border:1px solid #c4c4c4;background:#fff;border-bottom:none"></div>
<div style="left:582px;top:534px;width:14px;height:14px;background:#b9babf"></div>
<div style="left:536px;top:711px;width:342px;height:1px;background:#8e8e8e"></div>
<div style="left:536px;top:712px;width:342px;height:37px;background:#fff"></div>
<div style="left:626px;top:712px;width:1px;height:37px;background:#dedede"></div>
<div style="left:721px;top:712px;width:1px;height:37px;background:#dedede"></div>
<div style="left:821px;top:712px;width:1px;height:37px;background:#dedede"></div>
<div style="left:866px;top:712px;width:1px;height:37px;background:#dedede"></div>
<div style="left:865px;top:557px;width:0;height:0;border-bottom:4px solid #8a8a8a;border-left:4px solid transparent;border-right:4px solid transparent"></div><div style="left:865px;top:700px;width:0;height:0;border-top:4px solid #8a8a8a;border-left:4px solid transparent;border-right:4px solid transparent"></div><div style="left:866px;top:568px;width:7px;height:35px;background:#d3d4d9;border:1px solid #aeb0b7;border-radius:4px"></div>
<div style="left:536px;top:749px;width:16px;height:17px;background:#e9e9ec"></div><div style="left:551px;top:749px;width:1px;height:17px;background:#c9cad2"></div><div style="left:552px;top:749px;width:131px;height:17px;background:#efeff0"></div><div style="left:683px;top:749px;width:195px;height:17px;background:#f3f3f3;border-top:1px solid #cfcfcf"></div><div style="left:540px;top:754px;width:0;height:0;border-right:4px solid #8d8d8d;border-top:4px solid transparent;border-bottom:4px solid transparent"></div><div style="left:551px;top:755px;width:37px;height:7px;background:#d3d4d9;border:1px solid #aeb0b7;border-radius:4px"></div><div style="left:673px;top:754px;width:0;height:0;border-left:4px solid #8d8d8d;border-top:4px solid transparent;border-bottom:4px solid transparent"></div><svg style="position:absolute;left:686px;top:754px" width="42" height="9" viewBox="-1 0 42 9"><path d="M0 0 H1.3 V8.5 H0Z M1.3 4.25 L5.2 0.2 V8.3Z M5.2 4.25 L9.2 0.2 V8.3Z M16 4.25 L20 0.2 V8.3Z M20 4.25 L24 0.2 V8.3Z M34 4.25 L38 0.2 V8.3Z" fill="#8d8d8d"/></svg><div style="left:732px;top:750px;width:98px;height:16px;background:#fff"></div><div class="t" style="left:735px;top:749px;height:17px;line-height:20px;letter-spacing:-0.15px">Datensatz 0 von 27</div><svg style="position:absolute;left:837px;top:754px" width="42" height="9" viewBox="0 0 42 9"><path d="M0 0.2 L4 4.25 L0 8.3Z M14 0.2 L18 4.25 L14 8.3Z M18 0.2 L22 4.25 L18 8.3Z M29 0.2 L33 4.25 L29 8.3Z M33 0.2 L37 4.25 L33 8.3Z M37 0 H38.3 V8.5 H37Z" fill="#8d8d8d"/></svg>
<div style="left:536px;top:749px;width:90px;height:17px;background:#efeff0"></div>
<div style="left:541px;top:753px;width:0;height:0;border-right:4px solid #8d8d8d;border-top:4px solid transparent;border-bottom:4px solid transparent"></div>
<div style="left:551px;top:755px;width:37px;height:7px;background:#d3d4d9;border:1px solid #aeb0b7;border-radius:4px"></div>
<div style="left:878px;top:764px;width:2px;height:2px;background:#6a6a6a"></div><div style="left:874px;top:768px;width:2px;height:2px;background:#6a6a6a"></div><div style="left:878px;top:768px;width:2px;height:2px;background:#6a6a6a"></div>
<div style="left:702px;top:780px;width:2px;height:2px;background:#858585"></div><div style="left:706px;top:780px;width:2px;height:2px;background:#858585"></div><div style="left:710px;top:780px;width:2px;height:2px;background:#858585"></div>
<div style="left:900px;top:20px;width:429px;height:153px;border:1px solid #c9cbd6;background:#fff;box-sizing:border-box"></div>
<svg style="position:absolute;left:900px;top:60px" width="428" height="110" viewBox="0 0 428 110">
<path d="M119 21.5 H123" stroke="#c8c8c8"/><path d="M119 43.5 H123" stroke="#c8c8c8"/><path d="M119 65.5 H123" stroke="#c8c8c8"/>
<path d="M123.5 10 V87.5 H412" fill="none" stroke="#c0c0c0"/>
<path d="M119 87.5 H124" stroke="#c0c0c0"/>
<path d="M411.5 10 V87" stroke="#d0d0d0"/>
<rect x="128.5" y="10.5" width="15" height="77" fill="#00a0cc" stroke="#0a4357" stroke-width="1"/><rect x="154.5" y="10.5" width="15" height="77" fill="#00a0cc" stroke="#0a4357" stroke-width="1"/><rect x="181.5" y="10.5" width="15" height="77" fill="#00a0cc" stroke="#0a4357" stroke-width="1"/><rect x="207.5" y="16.5" width="15" height="71" fill="#00a0cc" stroke="#0a4357" stroke-width="1"/><rect x="233.5" y="27.5" width="15" height="60" fill="#00a0cc" stroke="#0a4357" stroke-width="1"/><rect x="259.5" y="54.5" width="15" height="33" fill="#00a0cc" stroke="#0a4357" stroke-width="1"/><rect x="285.5" y="59.5" width="15" height="28" fill="#00a0cc" stroke="#0a4357" stroke-width="1"/><rect x="312.5" y="69.5" width="15" height="18" fill="#00a0cc" stroke="#0a4357" stroke-width="1"/><rect x="338.5" y="69.5" width="15" height="18" fill="#00a0cc" stroke="#0a4357" stroke-width="1"/><rect x="364.5" y="70.5" width="15" height="17" fill="#00a0cc" stroke="#0a4357" stroke-width="1"/><rect x="390.5" y="10.5" width="15" height="77" fill="#00a0cc" stroke="#0a4357" stroke-width="1"/>
<text x="112" y="92" text-anchor="end" font-size="12" fill="#222" font-family="Liberation Sans">0,00</text>
<text transform="translate(33 61.8) rotate(-90)" text-anchor="start" font-size="11" letter-spacing="-0.2" fill="#333" font-family="Liberation Sans">Umsatz in Tsd</text>
</svg>
<div style="left:1108px;top:181px;width:2px;height:2px;background:#858585"></div><div style="left:1112px;top:181px;width:2px;height:2px;background:#858585"></div><div style="left:1116px;top:181px;width:2px;height:2px;background:#858585"></div>
<div style="left:900px;top:189px;width:429px;height:249px;border:1px solid #c9cbd6;background:#fff;box-sizing:border-box"></div><div style="left:901px;top:190px;width:427px;height:35px;background:#e6e7eb"></div><div class="t" style="left:906px;top:190px;font-size:15px;font-weight:bold;color:#222;line-height:36px;letter-spacing:-0.15px">Artikelauskunft</div><svg style="position:absolute;left:1212px;top:199px" width="16.5" height="16.5" viewBox="0 0 15 15"><path d="M10.85 3.78 A5 5 0 0 0 3.6 5.2" fill="none" stroke="#8e8e8e" stroke-width="2.2"/><path d="M4.09 11.16 A5 5 0 0 0 11.6 9.6" fill="none" stroke="#8e8e8e" stroke-width="2.2"/><path d="M0.9 5.4 L6 5.4 L3.3 8.6 Z" fill="#8e8e8e"/><path d="M9.7 9.6 L14.8 9.6 L12.6 6.3 Z" fill="#8e8e8e"/></svg><div style="left:1239px;top:201px;width:1px;height:14px;background:#d0d1d6"></div><div style="left:1253px;top:214px;width:12px;height:2px;background:#9a9a9a"></div><div style="left:1277px;top:202px;width:14px;height:11px;border:1.5px solid #9a9a9a;border-top-width:3px;box-sizing:border-box"></div><svg style="position:absolute;left:1305px;top:203px" width="11" height="11" viewBox="0 0 11 11"><path d="M1 1L10 10M10 1L1 10" stroke="#9a9a9a" stroke-width="1.8"/></svg>
<div style="left:910px;top:236px;width:14px;height:3px;background:#6e6e6e"></div><div style="left:910px;top:242px;width:14px;height:3px;background:#6e6e6e"></div><div style="left:910px;top:248px;width:14px;height:3px;background:#6e6e6e"></div>
<div style="left:969px;top:231px;width:200px;height:25px;border:1px solid #c2c2c2;background:#fff"></div>
<div class="t" style="left:975px;top:232px;color:#9a9a9a;line-height:25px">Suche</div>
<div style="left:1174px;top:231px;width:25px;height:25px;border:1px solid #cfcfcf;background:#f3f3f3"></div>
<div style="left:1182px;top:239px;width:0;height:0;border-top:9px solid #3b3f4a;border-left:5px solid transparent;border-right:5px solid transparent"></div>
<div class="t" style="left:1209px;top:237px;font-size:11px;color:#2d55c8;line-height:14px">Datensätze wählen</div>
<div style="left:1310px;top:240px;width:0;height:0;border-top:4px solid #333;border-left:4px solid transparent;border-right:4px solid transparent"></div>
<div style="left:905px;top:262px;width:419px;height:170px;border:1px solid #c6c6c6;background:#fff"></div><div style="left:906px;top:287px;width:15px;height:127px;background:#f0f1f4"></div><div style="left:906px;top:288px;width:400px;height:20px;background:#fff"></div><div style="left:906px;top:288px;width:15px;height:20px;background:#f0f1f4"></div><div style="left:906px;top:307px;width:400px;height:1px;background:#dedede"></div><div style="left:906px;top:307px;width:15px;height:1px;background:#c9cad2"></div><div class="t clip" style="left:926px;top:288px;width:77px;height:20px;line-height:21px;letter-spacing:-0.2px">00001031</div><div class="t clip" style="left:1008px;top:288px;width:116px;height:20px;line-height:21px;letter-spacing:-0.2px">Tischplatte (Mengenf...</div><div class="t clip" style="left:1129px;top:288px;width:71px;height:20px;line-height:21px;letter-spacing:-0.2px">010 &nbsp;|&nbsp; Heim...</div><div class="t clip" style="left:1205px;top:288px;width:86px;height:20px;line-height:21px;letter-spacing:-0.2px">Heimwerker</div><div class="t clip" style="left:1296px;top:288px;width:10px;height:20px;line-height:21px;letter-spacing:-0.2px">St</div><div style="left:906px;top:308px;width:400px;height:20px;background:#f4f4f4"></div><div style="left:906px;top:308px;width:15px;height:20px;background:#f0f1f4"></div><div style="left:906px;top:327px;width:400px;height:1px;background:#dedede"></div><div style="left:906px;top:327px;width:15px;height:1px;background:#c9cad2"></div><div class="t clip" style="left:926px;top:308px;width:77px;height:20px;line-height:21px;letter-spacing:-0.2px">00100040</div><div class="t clip" style="left:1008px;top:308px;width:116px;height:20px;line-height:21px;letter-spacing:-0.2px">S-VHS-C-Camera (Au...</div><div class="t clip" style="left:1129px;top:308px;width:71px;height:20px;line-height:21px;letter-spacing:-0.2px">042 &nbsp;|&nbsp; Video</div><div class="t clip" style="left:1205px;top:308px;width:86px;height:20px;line-height:21px;letter-spacing:-0.2px">Video</div><div class="t clip" style="left:1296px;top:308px;width:10px;height:20px;line-height:21px;letter-spacing:-0.2px">St</div><div style="left:906px;top:328px;width:400px;height:20px;background:#fff"></div><div style="left:906px;top:328px;width:15px;height:20px;background:#f0f1f4"></div><div style="left:906px;top:347px;width:400px;height:1px;background:#dedede"></div><div style="left:906px;top:347px;width:15px;height:1px;background:#c9cad2"></div><div class="t clip" style="left:926px;top:328px;width:77px;height:20px;line-height:21px;letter-spacing:-0.2px">00100041</div><div class="t clip" style="left:1008px;top:328px;width:116px;height:20px;line-height:21px;letter-spacing:-0.2px">T-Shirt (Variante)</div><div class="t clip" style="left:1129px;top:328px;width:71px;height:20px;line-height:21px;letter-spacing:-0.2px">070 &nbsp;|&nbsp; Textil...</div><div class="t clip" style="left:1205px;top:328px;width:86px;height:20px;line-height:21px;letter-spacing:-0.2px">Textilwaren</div><div class="t clip" style="left:1296px;top:328px;width:10px;height:20px;line-height:21px;letter-spacing:-0.2px">St</div><div style="left:906px;top:348px;width:400px;height:20px;background:#f4f4f4"></div><div style="left:906px;top:348px;width:15px;height:20px;background:#f0f1f4"></div><div style="left:906px;top:367px;width:400px;height:1px;background:#dedede"></div><div style="left:906px;top:367px;width:15px;height:1px;background:#c9cad2"></div><div class="t clip" style="left:926px;top:348px;width:77px;height:20px;line-height:21px;letter-spacing:-0.2px">00100041</div><div class="t clip" style="left:1008px;top:348px;width:116px;height:20px;line-height:21px;letter-spacing:-0.2px">T-Shirt (Variante)</div><div class="t clip" style="left:1129px;top:348px;width:71px;height:20px;line-height:21px;letter-spacing:-0.2px">070 &nbsp;|&nbsp; Textil...</div><div class="t clip" style="left:1205px;top:348px;width:86px;height:20px;line-height:21px;letter-spacing:-0.2px">Textilwaren</div><div class="t clip" style="left:1296px;top:348px;width:10px;height:20px;line-height:21px;letter-spacing:-0.2px">St</div><div style="left:906px;top:368px;width:400px;height:20px;background:#fff"></div><div style="left:906px;top:368px;width:15px;height:20px;background:#f0f1f4"></div><div style="left:906px;top:387px;width:400px;height:1px;background:#dedede"></div><div style="left:906px;top:387px;width:15px;height:1px;background:#c9cad2"></div><div class="t clip" style="left:926px;top:368px;width:77px;height:20px;line-height:21px;letter-spacing:-0.2px">00100041</div><div class="t clip" style="left:1008px;top:368px;width:116px;height:20px;line-height:21px;letter-spacing:-0.2px">T-Shirt (Variante)</div><div class="t clip" style="left:1129px;top:368px;width:71px;height:20px;line-height:21px;letter-spacing:-0.2px">070 &nbsp;|&nbsp; Textil...</div><div class="t clip" style="left:1205px;top:368px;width:86px;height:20px;line-height:21px;letter-spacing:-0.2px">Textilwaren</div><div class="t clip" style="left:1296px;top:368px;width:10px;height:20px;line-height:21px;letter-spacing:-0.2px">St</div><div style="left:906px;top:388px;width:400px;height:20px;background:#f4f4f4"></div><div style="left:906px;top:388px;width:15px;height:20px;background:#f0f1f4"></div><div style="left:906px;top:407px;width:400px;height:1px;background:#dedede"></div><div style="left:906px;top:407px;width:15px;height:1px;background:#c9cad2"></div><div class="t clip" style="left:926px;top:388px;width:77px;height:20px;line-height:21px;letter-spacing:-0.2px">00100041</div><div class="t clip" style="left:1008px;top:388px;width:116px;height:20px;line-height:21px;letter-spacing:-0.2px">T-Shirt (Variante)</div><div class="t clip" style="left:1129px;top:388px;width:71px;height:20px;line-height:21px;letter-spacing:-0.2px">070 &nbsp;|&nbsp; Textil...</div><div class="t clip" style="left:1205px;top:388px;width:86px;height:20px;line-height:21px;letter-spacing:-0.2px">Textilwaren</div><div class="t clip" style="left:1296px;top:388px;width:10px;height:20px;line-height:21px;letter-spacing:-0.2px">St</div><div style="left:906px;top:408px;width:400px;height:6px;background:#fff"></div><div style="left:906px;top:408px;width:15px;height:6px;background:#f0f1f4"></div><div style="left:1003px;top:288px;width:1px;height:126px;background:#dedede"></div><div style="left:1124px;top:288px;width:1px;height:126px;background:#dedede"></div><div style="left:1200px;top:288px;width:1px;height:126px;background:#dedede"></div><div style="left:1291px;top:288px;width:1px;height:126px;background:#dedede"></div><div style="left:921px;top:288px;width:1px;height:126px;background:#c9cad2"></div><div style="left:906px;top:262px;width:417px;height:25px;background:#91949c"></div><div style="left:921px;top:262px;width:1px;height:25px;background:#e8e9ee"></div><div style="left:1003px;top:262px;width:1px;height:25px;background:#e8e9ee"></div><div style="left:1124px;top:262px;width:1px;height:25px;background:#e8e9ee"></div><div style="left:1200px;top:262px;width:1px;height:25px;background:#e8e9ee"></div><div style="left:1291px;top:262px;width:1px;height:25px;background:#e8e9ee"></div><div style="left:1306px;top:262px;width:1px;height:25px;background:#e8e9ee"></div><div class="t clip" style="left:926px;top:262px;width:77px;height:25px;line-height:28px;color:#fff">Artikelnummer</div><div class="t clip" style="left:1008px;top:262px;width:116px;height:25px;line-height:28px;color:#fff">Matchcode Artikel</div><div class="t clip" style="left:1129px;top:262px;width:71px;height:25px;line-height:28px;color:#fff">Artikelgruppe</div><div class="t clip" style="left:1205px;top:262px;width:86px;height:25px;line-height:28px;color:#fff">Artikelgruppe...</div><div class="t clip" style="left:1296px;top:262px;width:10px;height:25px;line-height:28px;color:#fff">Ar</div><div style="left:1306px;top:288px;width:17px;height:126px;background:#f1f1f1"></div>
<div style="left:1311px;top:294px;width:0;height:0;border-bottom:4px solid #8a8a8a;border-left:4px solid transparent;border-right:4px solid transparent"></div><div style="left:1311px;top:404px;width:0;height:0;border-top:4px solid #8a8a8a;border-left:4px solid transparent;border-right:4px solid transparent"></div>
<div style="left:1311px;top:303px;width:8px;height:8px;border:1px solid #b4b6bc;border-radius:50%;background:#dcdde1"></div>
<div style="left:906px;top:414px;width:16px;height:17px;background:#e9e9ec"></div><div style="left:921px;top:414px;width:1px;height:17px;background:#c9cad2"></div><div style="left:922px;top:414px;width:183px;height:17px;background:#efeff0"></div><div style="left:1105px;top:414px;width:218px;height:17px;background:#f3f3f3;border-top:1px solid #cfcfcf"></div><div style="left:928px;top:419px;width:0;height:0;border-right:4px solid #8d8d8d;border-top:4px solid transparent;border-bottom:4px solid transparent"></div><div style="left:937px;top:420px;width:92px;height:7px;background:#d3d4d9;border:1px solid #aeb0b7;border-radius:4px"></div><div style="left:1095px;top:419px;width:0;height:0;border-left:4px solid #8d8d8d;border-top:4px solid transparent;border-bottom:4px solid transparent"></div><svg style="position:absolute;left:1108px;top:419px" width="42" height="9" viewBox="-1 0 42 9"><path d="M0 0 H1.3 V8.5 H0Z M1.3 4.25 L5.2 0.2 V8.3Z M5.2 4.25 L9.2 0.2 V8.3Z M16 4.25 L20 0.2 V8.3Z M20 4.25 L24 0.2 V8.3Z M34 4.25 L38 0.2 V8.3Z" fill="#8d8d8d"/></svg><div style="left:1154px;top:415px;width:104px;height:16px;background:#fff"></div><div class="t" style="left:1157px;top:414px;height:17px;line-height:20px;letter-spacing:-0.15px">Datensatz 0 von 147</div><svg style="position:absolute;left:1265px;top:419px" width="42" height="9" viewBox="0 0 42 9"><path d="M0 0.2 L4 4.25 L0 8.3Z M14 0.2 L18 4.25 L14 8.3Z M18 0.2 L22 4.25 L18 8.3Z M29 0.2 L33 4.25 L29 8.3Z M33 0.2 L37 4.25 L33 8.3Z M37 0 H38.3 V8.5 H37Z" fill="#8d8d8d"/></svg>
<div style="left:1108px;top:445px;width:2px;height:2px;background:#858585"></div><div style="left:1112px;top:445px;width:2px;height:2px;background:#858585"></div><div style="left:1116px;top:445px;width:2px;height:2px;background:#858585"></div>
<div style="left:1340px;top:74px;width:17px;height:706px;background:#f8f8f9"></div>
<div style="left:1344px;top:80px;width:0;height:0;border-bottom:4px solid #777;border-left:4px solid transparent;border-right:4px solid transparent"></div>
<div style="left:1345px;top:221px;width:7px;height:545px;background:#d0d1d7;border:1px solid #a9abb3;border-radius:4px"></div>
<div style="left:1344px;top:771px;width:0;height:0;border-top:4px solid #777;border-left:4px solid transparent;border-right:4px solid transparent"></div>
</div></div>
<div style="left:0px;top:0px;width:1364px;height:23px;background:#252525"></div>
<svg style="position:absolute;left:0;top:0" width="1364" height="23" viewBox="0 0 1364 23">
<path d="M265.5 23 C268 19 268.5 14 268.5 8 Q268.5 1 275 1 H417 C421 1 422.5 3 424.5 7 L431 19 C432.5 22 433.5 23 436 23 Z" fill="#2d2d2d" stroke="#474747" stroke-width="1"/>
<path d="M112.5 23 C115 19 115.5 14 115.5 8 Q115.5 1 122 1 H255 C259 1 260.5 3 262 7 L266 19 C267 22 268 23 270 23 Z" fill="#2d2d2d" stroke="#474747" stroke-width="1"/>
<path d="M0.5 23 V5 Q0.5 1 5 1 H101 C105 1 106.5 3 108.5 7 L116 19 C117.5 22 118.5 23 121 23 Z" fill="#3c3c3c" stroke="#505050" stroke-width="1"/>
<path d="M1353 7 L1361 15 M1361 7 L1353 15" stroke="#3a3a3a" stroke-width="1.2"/>
</svg>
<svg style="position:absolute;left:6px;top:3px" width="16" height="16" viewBox="0 0 16 16"><rect x="0" y="0" width="16" height="16" fill="#00b010"/><rect x="0" y="0" width="4.8" height="16" fill="#2248a8"/><circle cx="6.8" cy="11.1" r="2.3" fill="none" stroke="#fff" stroke-width="1.3"/><path d="M6.7 7.6 V4" fill="none" stroke="#fff" stroke-width="1.3"/><path d="M4.8 5 L6.7 2.3 L8.6 5Z" fill="#fff"/><path d="M10.3 7.6 L12.8 5.1" stroke="#fff" stroke-width="1.4"/><path d="M10.4 4.1 H13.5 V7.2Z" fill="#fff"/><path d="M10.8 11 H13" stroke="#fff" stroke-width="1.6"/><path d="M12.3 8.9 L15 11 L12.3 13.1Z" fill="#fff"/></svg>
<div class="t" style="left:30px;top:4px;font-size:11px;font-weight:bold;color:#fff;line-height:14px">Control-Center</div>
<svg style="position:absolute;left:120px;top:3px" width="16" height="16" viewBox="0 0 16 16"><rect x="0" y="0" width="16" height="16" fill="#00b010"/><rect x="0" y="0" width="4.8" height="16" fill="#2248a8"/><circle cx="6.8" cy="11.1" r="2.3" fill="none" stroke="#fff" stroke-width="1.3"/><path d="M6.7 7.6 V4" fill="none" stroke="#fff" stroke-width="1.3"/><path d="M4.8 5 L6.7 2.3 L8.6 5Z" fill="#fff"/><path d="M10.3 7.6 L12.8 5.1" stroke="#fff" stroke-width="1.4"/><path d="M10.4 4.1 H13.5 V7.2Z" fill="#fff"/><path d="M10.8 11 H13" stroke="#fff" stroke-width="1.6"/><path d="M12.3 8.9 L15 11 L12.3 13.1Z" fill="#fff"/></svg>
<div class="t" style="left:145px;top:4px;font-size:12px;color:#f0f0f0;line-height:14px">Mitarbeiterzuordnung</div>
<svg style="position:absolute;left:273px;top:3px" width="16" height="16" viewBox="0 0 16 16"><rect x="0" y="0" width="16" height="16" fill="#00b010"/><rect x="0" y="0" width="4.8" height="16" fill="#2248a8"/><circle cx="6.8" cy="11.1" r="2.3" fill="none" stroke="#fff" stroke-width="1.3"/><path d="M6.7 7.6 V4" fill="none" stroke="#fff" stroke-width="1.3"/><path d="M4.8 5 L6.7 2.3 L8.6 5Z" fill="#fff"/><path d="M10.3 7.6 L12.8 5.1" stroke="#fff" stroke-width="1.4"/><path d="M10.4 4.1 H13.5 V7.2Z" fill="#fff"/><path d="M10.8 11 H13" stroke="#fff" stroke-width="1.6"/><path d="M12.3 8.9 L15 11 L12.3 13.1Z" fill="#fff"/></svg>
<div class="t" style="left:297px;top:4px;font-size:11.4px;color:#f0f0f0;line-height:14px">WinBDE Statusübersicht</div>
<div style="left:0px;top:23px;width:1364px;height:40px;background:#f2f3f7"></div>
<div style="left:0px;top:63px;width:1364px;height:3px;background:#c5c7d1"></div>
<div style="left:155px;top:29px;width:74px;height:34px;background:#e5e6ea"></div>
<div style="left:155px;top:31px;width:74px;height:32px;font-size:13px;color:#222;line-height:34px;text-align:center;white-space:nowrap">Lager</div>
<div style="left:231px;top:29px;width:163px;height:34px;background:#e5e6ea"></div>
<div style="left:231px;top:31px;width:163px;height:32px;font-size:13px;color:#222;line-height:34px;text-align:center;white-space:nowrap">Marketing &amp; Vertrieb</div>
<div style="left:396px;top:29px;width:110px;height:34px;background:#e5e6ea"></div>
<div style="left:396px;top:31px;width:110px;height:32px;font-size:13px;color:#222;line-height:34px;text-align:center;white-space:nowrap">Distribution</div>
<div style="left:508px;top:29px;width:106px;height:34px;background:#e5e6ea"></div>
<div style="left:508px;top:31px;width:106px;height:32px;font-size:13px;color:#222;line-height:34px;text-align:center;white-space:nowrap">Controlling</div>
<div style="left:4px;top:29px;width:149px;height:37px;background:#fff;border-top:2px solid #1f4fcf;border-right:1px solid #c8cad4"></div>
<div style="left:4px;top:32px;width:148px;height:31px;font-size:13px;color:#222;line-height:32px;text-align:center;white-space:nowrap">Sortiment &amp; Einkauf</div>
<svg style="position:absolute;left:1288px;top:37px" width="14" height="14" viewBox="0 0 14 14"><path d="M7 1V13M1 7H13" stroke="#8c8c8c" stroke-width="2"/></svg>
<svg style="position:absolute;left:1313px;top:36px" width="16" height="16" viewBox="0 0 15 15"><path d="M10.85 3.78 A5 5 0 0 0 3.6 5.2" fill="none" stroke="#8f8f8f" stroke-width="2.2"/><path d="M4.09 11.16 A5 5 0 0 0 11.6 9.6" fill="none" stroke="#8f8f8f" stroke-width="2.2"/><path d="M0.9 5.4 L6 5.4 L3.3 8.6 Z" fill="#8f8f8f"/><path d="M9.7 9.6 L14.8 9.6 L12.6 6.3 Z" fill="#8f8f8f"/></svg>
<svg style="position:absolute;left:1340px;top:37px" width="15" height="15" viewBox="0 0 15 15"><path d="M1.8 13 L7.5 7.3" stroke="#8f8f8f" stroke-width="3.2" stroke-linecap="round"/><circle cx="9.6" cy="5.2" r="4.4" fill="#8f8f8f"/><path d="M8.6 4.2 L10.6 6.2 L15.5 1.3 L13.5 -0.7 Z" fill="#f1f2f6"/></svg>
<div style="left:0px;top:789px;width:1364px;height:3px;background:#f3f2ee"></div>
</body></html>
